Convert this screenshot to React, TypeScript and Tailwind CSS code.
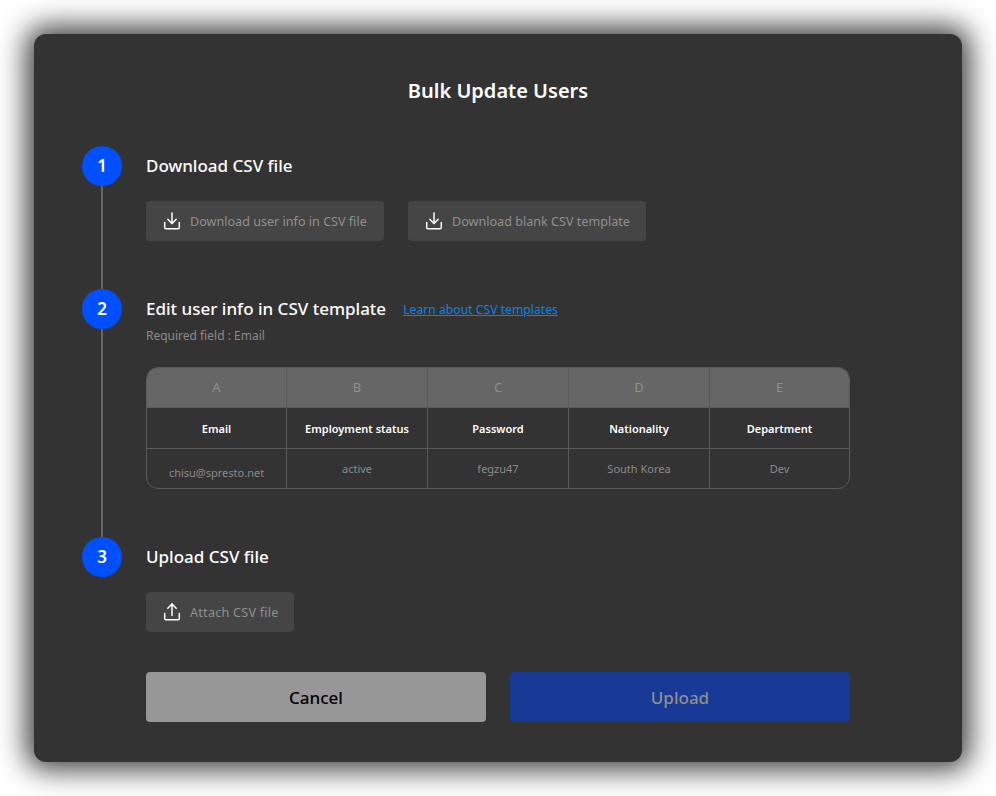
function DownloadIcon() {
  return (
    <svg width="20" height="20" viewBox="0 0 20 20" fill="none" stroke="#ffffff" strokeWidth="1.5" strokeLinecap="round" strokeLinejoin="round" className="shrink-0">
      <path d="M10 2V12.500" />
      <path d="M5.800 8.300 10 12.500l4.200-4.200" />
      <path d="M2.700 11.500V16.500a1.300 1.300 0 0 0 1.300 1.300h12a1.300 1.300 0 0 0 1.300-1.300v-5" />
    </svg>
  );
}

function UploadIcon() {
  return (
    <svg width="20" height="20" viewBox="0 0 20 20" fill="none" stroke="#ffffff" strokeWidth="1.5" strokeLinecap="round" strokeLinejoin="round" className="shrink-0">
      <path d="M10 13.500V2" />
      <path d="M5.800 6.200 10 2l4.200 4.200" />
      <path d="M2.700 11.500V16.500a1.300 1.300 0 0 0 1.300 1.300h12a1.300 1.300 0 0 0 1.300-1.300v-5" />
    </svg>
  );
}

function ActionButton({ icon, label, width, tracking }: { icon: React.ReactNode; label: string; width: string; tracking?: string }) {
  return (
    <button className={`flex h-10 items-center gap-2 whitespace-nowrap rounded-[4px] bg-[#454545] pl-4 text-[12.6px] text-[#8f8f8f] ${width}`}>
      {icon}
      <span className={`pt-0.5 ${tracking ?? ""}`}>{label}</span>
    </button>
  );
}

function Step({ n, line, heightClass, children }: { n: number; line?: boolean; heightClass?: string; children: React.ReactNode }) {
  return (
    <div className={`flex gap-6 ${heightClass ?? ""}`}>
      <div className="flex w-10 shrink-0 flex-col items-center">
        <div className="flex h-10 w-10 shrink-0 items-center justify-center rounded-full bg-[#0050ff] text-[17px] font-semibold text-white">{n}</div>
        {line && <div className="w-0.5 flex-1 bg-[#666666]" />}
      </div>
      <div className="min-w-0 flex-1">{children}</div>
    </div>
  );
}

const letters = ["A", "B", "C", "D", "E"];
const heads = ["Email", "Employment status", "Password", "Nationality", "Department"];
const values = ["chisu@spresto.net", "active", "fegzu47", "South Korea", "Dev"];

export default function App() {
  return (
    <div className="h-[796px] w-[996px] bg-white p-[34px] font-['Noto_Sans','Noto_Sans_CJK_KR',sans-serif]">
      <div className="h-[728px] w-[928px] rounded-xl bg-[#333333] pl-12 pr-[112px] pt-10 shadow-[0_0_28px_8px_rgba(0,0,0,0.75)]">
        <h1 className="h-8 pl-16 pt-px text-center text-[20px] font-semibold leading-8 text-white">Bulk Update Users</h1>
        <div className="mt-10">
          <Step n={1} line heightClass="h-[143px]">
            <h2 className="text-[17px] font-medium leading-10 text-white">Download CSV file</h2>
            <div className="mt-[15px] flex gap-6">
              <ActionButton icon={<DownloadIcon />} label="Download user info in CSV file" width="w-[238px]" />
              <ActionButton icon={<DownloadIcon />} label="Download blank CSV template" width="w-[238px]" />
            </div>
          </Step>
          <Step n={2} line heightClass="h-[248px]">
            <div className="flex h-10 items-center gap-[17px]">
              <h2 className="text-[17px] font-medium text-white">Edit user info in CSV template</h2>
              <a className="pt-0.5 text-[12.2px] text-[#0a84e8] underline">Learn about CSV templates</a>
            </div>
            <p className="-mt-[3px] text-[12px] leading-5 text-[#8a8a8a]">Required field : Email</p>
            <div className="mt-[21px] grid h-[122px] grid-cols-[140px_141px_141px_141px_1fr] grid-rows-[40px_41px_1fr] overflow-hidden rounded-xl border border-[#5a5a5a]">
              {letters.map((t, i) => (
                <div key={t} className={`flex items-center justify-center border-b border-[#5a5a5a] bg-[#666666] pt-px text-[13px] text-[#8f8f8f] ${i < 4 ? "border-r" : ""}`}>{t}</div>
              ))}
              {heads.map((t, i) => (
                <div key={t} className={`flex items-center justify-center border-b border-[#5a5a5a] pt-[3px] text-[11px] font-semibold text-white ${i < 4 ? "border-r" : ""}`}>{t}</div>
              ))}
              {values.map((t, i) => (
                <div key={t} className={`flex items-center justify-center border-[#5a5a5a] text-[11px] text-[#8a8a8a] ${i < 4 ? "border-r" : ""} ${i === 0 ? "pt-[9px]" : "pt-px"}`}>{t}</div>
              ))}
            </div>
          </Step>
          <Step n={3}>
            <h2 className="text-[17px] font-medium leading-10 text-white">Upload CSV file</h2>
            <div className="mt-[15px] flex">
              <ActionButton icon={<UploadIcon />} label="Attach CSV file" width="w-[148px]" tracking="tracking-[0.25px]" />
            </div>
          </Step>
        </div>
        <div className="mt-10 flex gap-6 pl-16">
          <button className="h-[50px] w-[340px] rounded-[4px] bg-[#979797] pt-px text-[17px] font-medium text-black">Cancel</button>
          <button className="h-[50px] w-[340px] rounded-[4px] bg-[#183a96] pt-px text-[17px] font-medium text-[#8f8f8f]">Upload</button>
        </div>
      </div>
    </div>
  );
}
